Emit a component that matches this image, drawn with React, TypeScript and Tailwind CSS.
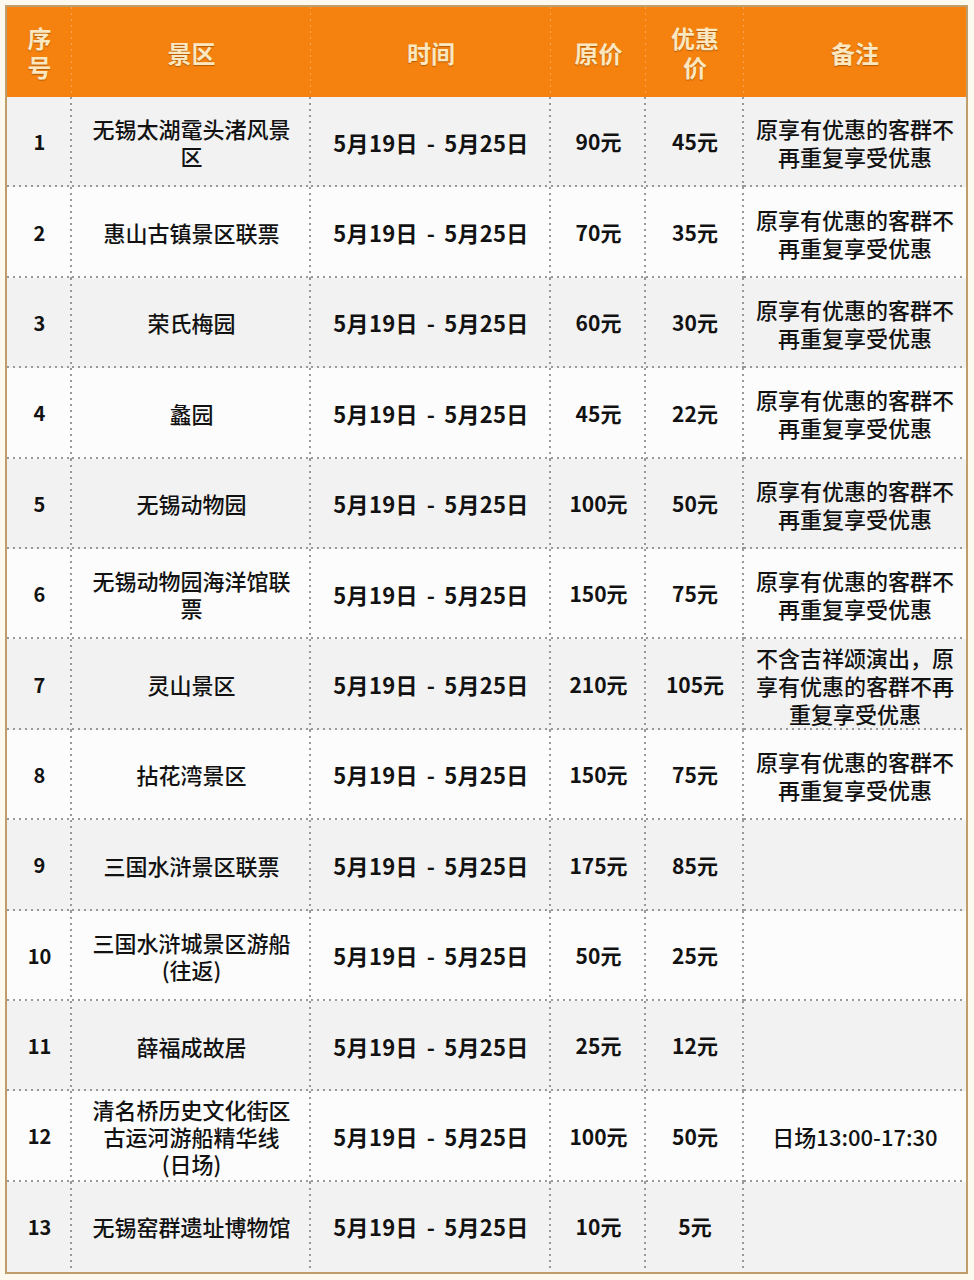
import React from "react";

type Row = {
  no: string;
  name: string[];
  price: string;
  sale: string;
  note: string[];
};

const rows: Row[] = [
  { no: "1", name: ["无锡太湖鼋头渚风景", "区"], price: "90元", sale: "45元", note: ["原享有优惠的客群不", "再重复享受优惠"] },
  { no: "2", name: ["惠山古镇景区联票"], price: "70元", sale: "35元", note: ["原享有优惠的客群不", "再重复享受优惠"] },
  { no: "3", name: ["荣氏梅园"], price: "60元", sale: "30元", note: ["原享有优惠的客群不", "再重复享受优惠"] },
  { no: "4", name: ["蠡园"], price: "45元", sale: "22元", note: ["原享有优惠的客群不", "再重复享受优惠"] },
  { no: "5", name: ["无锡动物园"], price: "100元", sale: "50元", note: ["原享有优惠的客群不", "再重复享受优惠"] },
  { no: "6", name: ["无锡动物园海洋馆联", "票"], price: "150元", sale: "75元", note: ["原享有优惠的客群不", "再重复享受优惠"] },
  { no: "7", name: ["灵山景区"], price: "210元", sale: "105元", note: ["不含吉祥颂演出，原", "享有优惠的客群不再", "重复享受优惠"] },
  { no: "8", name: ["拈花湾景区"], price: "150元", sale: "75元", note: ["原享有优惠的客群不", "再重复享受优惠"] },
  { no: "9", name: ["三国水浒景区联票"], price: "175元", sale: "85元", note: [] },
  { no: "10", name: ["三国水浒城景区游船", "(往返)"], price: "50元", sale: "25元", note: [] },
  { no: "11", name: ["薛福成故居"], price: "25元", sale: "12元", note: [] },
  { no: "12", name: ["清名桥历史文化街区", "古运河游船精华线", "(日场)"], price: "100元", sale: "50元", note: ["日场13:00-17:30"] },
  { no: "13", name: ["无锡窑群遗址博物馆"], price: "10元", sale: "5元", note: [] },
];

const font = "font-['Noto_Sans_CJK_SC','Noto_Sans',sans-serif]";

// dotted right + bottom edges
const dotsRB =
  "[background-image:linear-gradient(#999999_40%,transparent_40%),linear-gradient(to_right,#999999_40%,transparent_40%)] [background-position:right_top,left_bottom] [background-size:2px_6px,6px_2px] [background-repeat:repeat-y,repeat-x]";
const dotsB =
  "[background-image:linear-gradient(to_right,#999999_40%,transparent_40%)] [background-position:left_bottom] [background-size:6px_2px] [background-repeat:repeat-x]";
const dotsR =
  "[background-image:linear-gradient(#999999_40%,transparent_40%)] [background-position:right_top] [background-size:2px_6px] [background-repeat:repeat-y]";
const headDots =
  "[background-image:linear-gradient(#f7a45a_40%,transparent_40%)] [background-position:right_top] [background-size:1px_6px] [background-repeat:repeat-y]";

const headText =
  "text-[#fbe7c0] font-bold text-[24px] leading-[29px] [text-shadow:0_1px_1px_rgba(120,60,0,0.55)]";

function Lines({ lines }: { lines: string[] }) {
  return (
    <div className="flex flex-col items-center">
      {lines.map((l, i) => (
        <span key={i} className="whitespace-nowrap">
          {l}
        </span>
      ))}
    </div>
  );
}

export default function App() {
  return (
    <div className={`min-h-[1280px] w-[974px] bg-[#fdf9ef] pt-[5px] pl-[5px] ${font}`}>
      <div className="w-[963px] border-2 border-[#bf9e6b]">
        <div className="grid grid-cols-[65px_239px_240px_95px_98px_222px] h-[90px] bg-[#f5810e]">
          <div className={`flex items-center justify-center ${headDots} ${headText}`}>
            <Lines lines={["序", "号"]} />
          </div>
          <div className={`flex items-center justify-center ${headDots} ${headText}`}>景区</div>
          <div className={`flex items-center justify-center ${headDots} ${headText}`}>时间</div>
          <div className={`flex items-center justify-center ${headDots} ${headText}`}>原价</div>
          <div className={`flex items-center justify-center ${headDots} ${headText}`}>
            <Lines lines={["优惠", "价"]} />
          </div>
          <div className={`flex items-center justify-center ${headText}`}>备注</div>
        </div>
        {rows.map((r, idx) => {
          const last = idx === rows.length - 1;
          const bg = idx % 2 === 0 ? "bg-[#f2f2f2]" : "bg-[#fcfcfc]";
          const mid = last ? dotsR : dotsRB;
          const end = last ? "" : dotsB;
          return (
            <div
              key={r.no}
              className={`grid grid-cols-[65px_239px_240px_95px_98px_222px] h-[90.4px] text-[#121212] ${bg}`}
            >
              <div className={`flex items-center justify-center text-[20px] font-bold ${mid}`}>{r.no}</div>
              <div className={`flex items-center justify-center text-[22px] leading-[27px] font-medium ${mid}`}>
                <Lines lines={r.name} />
              </div>
              <div className={`flex items-center justify-center text-[22px] font-bold whitespace-nowrap tracking-[0.3px] ${mid}`}>
                <span>5月19日</span>
                <span className="px-[9px]">-</span>
                <span>5月25日</span>
              </div>
              <div className={`flex items-center justify-center text-[21px] font-bold ${mid}`}>{r.price}</div>
              <div className={`flex items-center justify-center text-[21px] font-bold ${mid}`}>{r.sale}</div>
              <div className={`flex items-center justify-center text-[22px] leading-[28px] font-medium ${end}`}>
                <Lines lines={r.note} />
              </div>
            </div>
          );
        })}
      </div>
    </div>
  );
}
